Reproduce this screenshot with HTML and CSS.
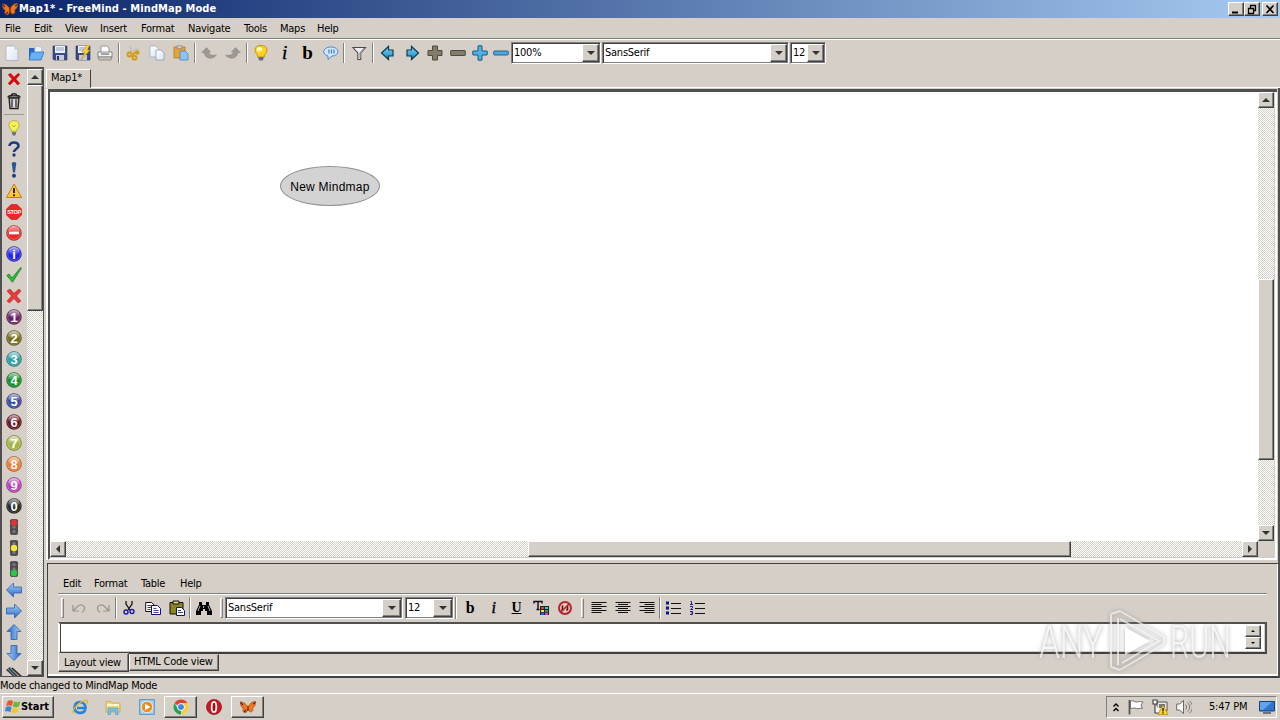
FILE: index.html
```
<!DOCTYPE html>
<html lang="en">
  <head>
    <meta charset="UTF-8" />
    <title>Map1* - FreeMind - MindMap Mode</title>
    <link rel="stylesheet" href="styles.css">
  </head>
  <body>
    <!-- shared icons -->
    <svg class="defs" width="0" height="0">
      <defs>
        <linearGradient id="gBlue" x1="0" y1="0" x2="0" y2="1"><stop offset="0" stop-color="#a9d2fa" /><stop offset="1" stop-color="#2766c8" /></linearGradient>
        <linearGradient id="gCyan" x1="0" y1="0" x2="0" y2="1"><stop offset="0" stop-color="#7fdcff" /><stop offset="1" stop-color="#1184bd" /></linearGradient>
        <linearGradient id="gShine" x1="0" y1="0" x2="0" y2="1"><stop offset="0" stop-color="#fff" stop-opacity=".6" /><stop offset="1" stop-color="#fff" stop-opacity=".08" /></linearGradient>
        <linearGradient id="gPage" x1="0" y1="0" x2="1" y2="1"><stop offset="0" stop-color="#fff" /><stop offset="1" stop-color="#dbe3f2" /></linearGradient>
      </defs>
      <symbol id="butterfly" viewBox="0 0 16 16">
        <path d="M8 8C6 4.500 3 2.500 0 3C.5 5.500 1 8.500 3.500 9.500C2 11 3 14.500 6 13.500C7.500 12.500 8 11 8 10C8.500 12 10.500 14 12 12.500C13.500 11.500 13 10 12.500 9C15 8 15.500 5 16 2.500C12 2 9.500 5 8 8Z" fill="#f0751d" stroke="#a84a12" stroke-width=".6" />
        <path d="M.5 3.500L3 6M15.500 3.500L13 5M4 13l2-2M8 7v5" stroke="#50240c" stroke-width="1.100" fill="none" />
      </symbol>
      <symbol id="page" viewBox="0 0 16 16"><path d="M2 1h8.500L14 4.500v11H2z" fill="url(#gPage)" stroke="#a7adba" stroke-width=".8" /><path d="M10.500 1v3.500H14z" fill="#c5cad6" /></symbol>
      <symbol id="ball" viewBox="0 0 16 16"><circle cx="8" cy="8" r="7.500" stroke="#000" stroke-opacity=".35" stroke-width=".8" /><circle cx="8" cy="8" r="6.300" fill="none" stroke="#fff" stroke-opacity=".35" stroke-width=".7" /><ellipse cx="8" cy="5" rx="5.500" ry="4" fill="url(#gShine)" /></symbol>
      <symbol id="light" viewBox="0 0 16 16"><path d="M3.500 2h9M3.500 7h9M3.500 12h9" stroke="#999" /><rect x="4.500" y=".5" width="7" height="15" rx="1" fill="#4b4b4b" stroke="#333" stroke-width=".6" /><circle cx="8" cy="3.500" r="1.700" fill="#787878" /><circle cx="8" cy="8" r="1.700" fill="#787878" /><circle cx="8" cy="12.500" r="1.700" fill="#787878" /></symbol>
      <symbol id="arrow" viewBox="0 0 16 16"><path d="M.5 8L7.500 1v4h8v6h-8v4z" fill="url(#gBlue)" stroke="#2d5fa8" stroke-width=".8" /></symbol>
      <symbol id="go" viewBox="0 0 16 16"><path d="M1.500 8L8.500 1.500v3.500h4.500v6H8.500v3.500z" fill="url(#gCyan)" stroke="#123a4e" stroke-width="1.200" /></symbol>
      <symbol id="plus" viewBox="0 0 16 16"><path d="M5.500 1h5v4.500H15v5h-4.500V15h-5v-4.500H1v-5h4.500z" /></symbol>
      <symbol id="plus-thin" viewBox="0 0 16 16"><path d="M6 1q2-.8 4 0v5h5q.8 2 0 4h-5v5q-2 .8-4 0v-5H1q-.8-2 0-4h5z" /></symbol>
      <symbol id="cross" viewBox="0 0 16 16"><path d="M1 3L4 1l4 4.300L13 1l2 2-4.500 5L15 13l-3 2-4-4.500L3.500 15 1 13l4.500-5z" /></symbol>
      <symbol id="undo" viewBox="0 0 16 16"><path d="M.7 7.500L5.500 2.500l4 4.500H7.500c.5 2.500 3.500 4 8 3-4.500 5.500-12 3.500-12.300-2.500z" fill="#9c9993" stroke="#85827c" stroke-width=".5" /></symbol>
      <symbol id="undo-thin" viewBox="0 0 16 16"><path d="M2 5v6h6M2.500 10.500l4-4c3-3 7.500-1 7 2 0 2-1 3-2.500 4" fill="none" stroke="#98948d" stroke-width="1.200" /></symbol>
      <symbol id="up" viewBox="0 0 8 4"><path d="M4 0L8 4H0z" /></symbol>
      <symbol id="down" viewBox="0 0 8 4"><path d="M0 0h8L4 4z" /></symbol>
    </svg>

    <div class="titlebar">
      <svg class="icon"><use href="#butterfly" /></svg>
      <h1>Map1* - FreeMind - MindMap Mode</h1>
      <div class="window-buttons">
        <button class="raised"><svg viewBox="0 0 12 11"><path d="M2 8.500h6" stroke="#000" stroke-width="2" /></svg></button>
        <button class="raised"><svg viewBox="0 0 12 11"><path d="M4.500 4V1.500h5v5H8M4 1.500h6M2.500 4.500h5v5h-5zM2 4.500h6" fill="none" stroke="#000" stroke-width="1.300" /></svg></button>
        <button class="raised close"><svg viewBox="0 0 12 11"><path d="M2.500 1.500l7 7.500M9.500 1.500l-7 7.500" stroke="#000" stroke-width="1.700" /></svg></button>
      </div>
    </div>

    <div class="menubar">
      <span>File</span><span>Edit</span><span>View</span><span>Insert</span><span>Format</span><span>Navigate</span><span>Tools</span><span>Maps</span><span>Help</span>
    </div>

    <div class="toolbar">
      <svg class="icon"><use href="#page" /></svg>
      <svg class="icon" viewBox="0 0 16 16"><path d="M1 3h5l1 2h6v9H1z" fill="#2767c9" /><path d="M8 1l6 1-1 7-7-1z" fill="#eef4ff" stroke="#9ab" stroke-width=".5" /><path d="M3 7h13l-3 8H1z" fill="#63b4f6" stroke="#2865bc" stroke-width=".7" /></svg>
      <svg class="icon" viewBox="0 0 16 16"><path d="M1 1h14v14H2l-1-1z" fill="#3b4c86" stroke="#26335f" stroke-width=".6" /><path d="M3 1h10v7H3z" fill="#eef1f8" /><path d="M4 3h8M4 5h8" stroke="#8fa0c4" /><path d="M4 10h8v5H4z" fill="#c6cbd8" /><path d="M5 11h2v4H5z" fill="#26335f" /></svg>
      <svg class="icon" viewBox="0 0 16 16"><path d="M1 1h14v14H2l-1-1z" fill="#3b4c86" stroke="#26335f" stroke-width=".6" /><path d="M3 1h10v7H3z" fill="#eef1f8" /><path d="M4 3h8M4 5h8" stroke="#8fa0c4" /><path d="M4 10h8v5H4z" fill="#c6cbd8" /><path d="M12 0l-5 7h3l-4 8 9-10h-3l3-5z" fill="#ffd42c" stroke="#c88a10" stroke-width=".6" /></svg>
      <svg class="icon" viewBox="0 0 16 16"><path d="M4 7V1h6l2 2v4" fill="#fff" stroke="#888" stroke-width=".8" /><path d="M1 7h14v5H1z" fill="#f3f1ed" stroke="#777" stroke-width=".8" /><path d="M1 12h14l-1 3H2z" fill="#c5c2bc" stroke="#777" stroke-width=".7" /><path d="M4 9h8" stroke="#555" /></svg>
      <i class="sep"></i>
      <svg class="icon" viewBox="0 0 16 16"><path d="M5 1l2 8M4 7l9-3" stroke="#c4bfb6" stroke-width="1.500" /><g fill="none" stroke="#d69a1b" stroke-width="2"><circle cx="4.500" cy="9.500" r="2" /><circle cx="9.500" cy="12.700" r="2" /><path d="M7.500 9.500l4-3" /><circle cx="12.300" cy="7.500" r="1.300" /></g></svg>
      <svg class="icon" viewBox="0 0 16 16"><path d="M1 1h6l3 3v8H1z" fill="url(#gPage)" stroke="#96a4c0" stroke-width=".7" /><path d="M7 5h5l3 3v7H7z" fill="url(#gPage)" stroke="#8292b4" stroke-width=".7" /></svg>
      <svg class="icon" viewBox="0 0 16 16"><path d="M1 2h11v11H1z" fill="#e7a333" stroke="#a8701a" stroke-width=".7" /><path d="M4 .7h5v3H4z" fill="#c9cbd2" stroke="#777" stroke-width=".6" /><path d="M7 6h5l3 3v6H7z" fill="#8fc3f6" stroke="#3a78bd" stroke-width=".7" /></svg>
      <i class="sep"></i>
      <svg class="icon"><use href="#undo" /></svg>
      <svg class="icon flip"><use href="#undo" /></svg>
      <i class="sep"></i>
      <svg class="icon" viewBox="0 0 16 16"><path d="M8 .5C.5.500 1 7 4.700 10v2h6.600v-2C15 7 15.500.5 8 .5z" fill="#ffd21e" stroke="#c58908" stroke-width=".9" /><ellipse cx="6.500" cy="4.300" rx="2.700" ry="2.500" fill="#fff7b0" /><path d="M5.500 12h5v2l-1 1.500h-3l-1-1.500z" fill="#6b6b78" /></svg>
      <span class="letter italic">i</span>
      <span class="letter">b</span>
      <svg class="icon" viewBox="0 0 16 16"><path d="M8 2c9 0 9 9 1 9l-4 3.500V11C-2 9 0 2 8 2z" fill="#cfe6ff" stroke="#3f7fc8" stroke-width=".9" /><path d="M6 4.500v4M8.500 4.500v4M11 4.500v4" stroke="#3f7fc8" stroke-width="1.200" /></svg>
      <i class="sep"></i>
      <svg class="icon" viewBox="0 0 16 16"><path d="M2 2.500h12.500L9.700 8v6.500H6.800V8z" fill="#f0efed" stroke="#4a4a4a" stroke-width="1.100" /><path d="M9 13V8l4-4.500" stroke="#999" stroke-width="1.300" fill="none" /></svg>
      <i class="sep"></i>
      <svg class="icon"><use href="#go" /></svg>
      <svg class="icon flip"><use href="#go" /></svg>
      <svg class="icon gray-plus"><use href="#plus" /></svg>
      <svg class="icon" viewBox="0 0 16 16"><rect x=".7" y="5.500" width="14.600" height="5" rx=".5" fill="#827c6b" stroke="#4f4a3d" /></svg>
      <svg class="icon blue-plus"><use href="#plus-thin" /></svg>
      <svg class="icon" viewBox="0 0 16 16"><rect x=".7" y="6" width="14.600" height="4" rx="1" fill="#4ba9dc" stroke="#1c597c" stroke-width=".9" /></svg>
      <div class="combo">100%<b class="raised"><svg class="tri"><use href="#down" /></svg></b></div>
      <div class="combo">SansSerif<b class="raised"><svg class="tri"><use href="#down" /></svg></b></div>
      <div class="combo">12<b class="raised"><svg class="tri"><use href="#down" /></svg></b></div>
    </div>

    <div class="workspace">
      <div class="side">
        <div class="side-icons">
          <svg class="icon del"><use href="#cross" /></svg>
          <svg class="icon trash" viewBox="0 0 16 17"><path d="M5.500 2.500c0-2 5-2 5 0M2 4.500C3 2 13 2 14 4.500z" fill="#ccc" stroke="#222" stroke-width="1.200" /><path d="M3 5.500h10l-1 10.500H4z" fill="#bbb" stroke="#222" stroke-width="1.300" /><path d="M6 7v7.500M10 7v7.500" stroke="#333" stroke-width="1.200" /><path d="M8 7v8" stroke="#fff" /></svg>
          <i class="rule"></i>
          <svg class="icon" viewBox="0 0 16 16"><path d="M8 .7c-6.500 0-6 6-2.700 9v1.500h5.400V9.700C14 6.700 14.500.7 8 .7z" fill="#f7f356" stroke="#aaa51c" stroke-width=".8" /><path d="M6 5l2 2 2-2" stroke="#b8b050" fill="none" /><path d="M6 12h4v2.500L8 16l-2-1.500z" fill="#777" /></svg>
          <svg class="icon" viewBox="0 0 16 16"><path d="M3.500 5c0-5 9.500-4.500 9 0-.3 3-4.500 3-4.500 6" fill="none" stroke="#1f3c7e" stroke-width="2.600" /><circle cx="8" cy="14" r="1.700" fill="#1f3c7e" /></svg>
          <svg class="icon" viewBox="0 0 16 16"><path d="M5.700 1q2.300-1.800 4.600 0L9 10.500H7z" fill="#2b5593" /><circle cx="8" cy="13.700" r="2" fill="#1f3c7e" /></svg>
          <svg class="icon" viewBox="0 0 16 16"><path d="M8 1l7.500 13.500H.5z" fill="#ffc63a" stroke="#b87412" stroke-width=".9" /><path d="M8 5v5" stroke="#222" stroke-width="1.900" /><circle cx="8" cy="12.300" r="1.100" fill="#222" /></svg>
          <svg class="icon" viewBox="0 0 16 16"><path d="M5 .5h6L15.500 5v6L11 15.500H5L.5 11V5z" fill="#ee2626" stroke="#b00" stroke-width=".5" /><text x="8" y="10" class="stop">STOP</text></svg>
          <svg class="icon" viewBox="0 0 16 16"><use href="#ball" fill="#f02525" /><path d="M3 8h10" stroke="#fff" stroke-width="2.700" /></svg>
          <svg class="icon" viewBox="0 0 16 16"><use href="#ball" fill="#2424e8" /><text x="8" y="12.500" class="num">i</text></svg>
          <svg class="icon" viewBox="0 0 16 16"><path d="M.8 8.500L3 7l3 4L14.500.7 15.500 1 6.500 15.300z" fill="#22c72e" stroke="#176c1d" stroke-width=".7" /></svg>
          <svg class="icon bad"><use href="#cross" /></svg>
          <svg class="icon" viewBox="0 0 16 16"><use href="#ball" fill="#6b1f62" /><text x="8" y="12.800" class="num">1</text></svg>
          <svg class="icon" viewBox="0 0 16 16"><use href="#ball" fill="#746a1b" /><text x="8" y="12.800" class="num">2</text></svg>
          <svg class="icon" viewBox="0 0 16 16"><use href="#ball" fill="#269ba5" /><text x="8" y="12.800" class="num">3</text></svg>
          <svg class="icon" viewBox="0 0 16 16"><use href="#ball" fill="#0b8c20" /><text x="8" y="12.800" class="num">4</text></svg>
          <svg class="icon" viewBox="0 0 16 16"><use href="#ball" fill="#3744a0" /><text x="8" y="12.800" class="num">5</text></svg>
          <svg class="icon" viewBox="0 0 16 16"><use href="#ball" fill="#680c18" /><text x="8" y="12.800" class="num">6</text></svg>
          <svg class="icon" viewBox="0 0 16 16"><use href="#ball" fill="#a4b441" /><text x="8" y="12.800" class="num">7</text></svg>
          <svg class="icon" viewBox="0 0 16 16"><use href="#ball" fill="#f27428" /><text x="8" y="12.800" class="num">8</text></svg>
          <svg class="icon" viewBox="0 0 16 16"><use href="#ball" fill="#bd38bd" /><text x="8" y="12.800" class="num">9</text></svg>
          <svg class="icon" viewBox="0 0 16 16"><use href="#ball" fill="#222" /><text x="8" y="12.800" class="num">0</text></svg>
          <svg class="icon" viewBox="0 0 16 16"><use href="#light" /><circle cx="8" cy="3.700" r="2.900" fill="#f02b35" /></svg>
          <svg class="icon" viewBox="0 0 16 16"><use href="#light" /><circle cx="8" cy="8" r="3.200" fill="#f8e63b" /></svg>
          <svg class="icon" viewBox="0 0 16 16"><use href="#light" /><circle cx="8" cy="12" r="3.200" fill="#27ca42" /></svg>
          <svg class="icon"><use href="#arrow" /></svg>
          <svg class="icon flip"><use href="#arrow" /></svg>
          <svg class="icon turn-up"><use href="#arrow" /></svg>
          <svg class="icon turn-down"><use href="#arrow" /></svg>
          <svg class="icon" viewBox="0 0 16 16"><path d="M0 4l4-3 12 12-3 3z" fill="#35444c" /><path d="M2 3l12 12M4 2l12 12" stroke="#8fa0a8" stroke-width=".8" /><path d="M6 2l10 9" stroke="#222" stroke-width="1.400" /></svg>
        </div>
        <div class="vscroll">
          <b class="raised arrow-btn"><svg class="tri"><use href="#up" /></svg></b>
          <b class="raised side-thumb"></b>
          <b class="raised arrow-btn end"><svg class="tri"><use href="#down" /></svg></b>
        </div>
      </div>

      <div class="main">
        <div class="tabs"><span class="map-tab">Map1*</span></div>
        <div class="map">
          <div class="canvas"><div class="node">New Mindmap</div></div>
          <div class="vscroll">
            <b class="raised arrow-btn"><svg class="tri"><use href="#up" /></svg></b>
            <b class="raised map-vthumb"></b>
            <b class="raised arrow-btn end"><svg class="tri"><use href="#down" /></svg></b>
          </div>
          <div class="hscroll">
            <b class="raised arrow-btn"><svg class="tri left"><use href="#up" /></svg></b>
            <b class="raised map-hthumb"></b>
            <b class="raised arrow-btn end"><svg class="tri right"><use href="#up" /></svg></b>
          </div>
        </div>

        <div class="note">
          <div class="note-menu"><span>Edit</span><span>Format</span><span>Table</span><span>Help</span></div>
          <div class="note-tools">
            <i class="grip"></i>
            <svg class="icon"><use href="#undo-thin" /></svg>
            <svg class="icon flip"><use href="#undo-thin" /></svg>
            <i class="sep"></i>
            <svg class="icon" viewBox="0 0 16 16"><path d="M5 1v3l4 6M11 1v3l-4 6" stroke="#111" stroke-width="1.300" fill="none" /><circle cx="5" cy="12" r="2" fill="none" stroke="#1a1a9c" stroke-width="1.400" /><circle cx="11" cy="11.500" r="2" fill="none" stroke="#1a1a9c" stroke-width="1.400" /></svg>
            <svg class="icon" viewBox="0 0 16 16"><path d="M.7 2.500h6l3 3v6h-9z" fill="#fff" stroke="#111" /><path d="M2.500 5.500h4M2.500 7.500h4M2.500 9.500h3" stroke="#111" stroke-width=".8" /><path d="M6.500 5.500h6l3 3v6h-9z" fill="#fff" stroke="#10107a" /><path d="M8.500 8.500h3M8.500 10.500h5M8.500 12.500h5" stroke="#10107a" stroke-width=".8" /></svg>
            <svg class="icon" viewBox="0 0 16 16"><path d="M1 2.500h13V14H1z" fill="#8b8624" stroke="#111" /><path d="M4 1h6v3H4z" fill="#d9d56a" stroke="#111" /><path d="M7.500 7.500h5l3 3v5h-8z" fill="#fff" stroke="#10107a" /><path d="M9 10.500h3M9 12.500h5" stroke="#10107a" stroke-width=".8" /></svg>
            <i class="sep"></i>
            <svg class="icon" viewBox="0 0 16 16"><path d="M3 2h3v3h4V2h3v3l3 6v4h-5v-4H9V9H7v2H5v4H0v-4l3-6z" /><path d="M4 6l-2 5M12 6l2 5M7.500 6v2" stroke="#ddd" stroke-width=".8" /></svg>
            <i class="grip"></i>
            <div class="combo">SansSerif<b class="raised"><svg class="tri"><use href="#down" /></svg></b></div>
            <div class="combo">12<b class="raised"><svg class="tri"><use href="#down" /></svg></b></div>
            <i class="sep"></i>
            <span class="letter small">b</span>
            <span class="letter small italic">i</span>
            <span class="letter small under">U</span>
            <svg class="icon" viewBox="0 0 16 16"><path d="M1 3.500v-2h8v2M5 2v7.500M3.500 9.500h3" stroke="#111" stroke-width="1.400" fill="none" /><path d="M7 6h9v9H7z" fill="#222" /><path d="M8 7h3v2H8z" fill="#e33" /><path d="M12 7h3v2h-3z" fill="#2cd0c0" /><path d="M8 10h3v2H8z" fill="#f3e32d" /><path d="M12 10h3v2h-3z" fill="#2b9e38" /><path d="M8 12.500h3V15H8z" fill="#2a55e0" /><path d="M12 12.500h3V15h-3z" fill="#d33ad3" /></svg>
            <svg class="icon" viewBox="0 0 16 16"><circle cx="8" cy="8" r="6" fill="#e7c3bf" stroke="#b3262c" stroke-width="2" /><path d="M5.500 5.500v4l-1 1M10.500 5.500v4l-1 1" stroke="#5a1518" stroke-width="1.600" fill="none" /><path d="M4 12l8-8" stroke="#b3262c" stroke-width="1.600" /></svg>
            <i class="grip"></i>
            <svg class="icon" viewBox="0 0 16 16"><path d="M.5 2.500h15M.5 4.500h10M.5 6.500h15M.5 8.500h10M.5 10.500h15M.5 12.500h10" stroke="#111" /></svg>
            <svg class="icon" viewBox="0 0 16 16"><path d="M.5 2.500h15M3 4.500h10M.5 6.500h15M3 8.500h10M.5 10.500h15M3 12.500h10" stroke="#111" /></svg>
            <svg class="icon" viewBox="0 0 16 16"><path d="M.5 2.500h15M5.500 4.500h10M.5 6.500h15M5.500 8.500h10M.5 10.500h15M5.500 12.500h10" stroke="#111" /></svg>
            <i class="sep"></i>
            <svg class="icon" viewBox="0 0 16 16"><path d="M1 1.500h3v3H1zM1 6.500h3v3H1zM1 11.500h3v3H1z" fill="#12127e" /><path d="M6 3.500h10M6 8.500h10M6 13.500h10" stroke="#111" /></svg>
            <svg class="icon" viewBox="0 0 16 16"><path d="M1.500 1.500h1v3M1 4.500h3M1 6.500h2.500v1.500L1.500 9.500H4M1 11.500h2.500v3H1M2 13h2" stroke="#12127e" stroke-width=".9" fill="none" /><path d="M6 3.500h10M6 8.500h10M6 13.500h10" stroke="#111" /></svg>
          </div>
          <div class="editor">
            <div class="spin"><b class="raised"><svg><use href="#up" /></svg></b><b class="raised"><svg><use href="#down" /></svg></b></div>
          </div>
          <div class="view-tabs"><span class="active">Layout view</span><span>HTML Code view</span></div>
        </div>
      </div>
    </div>

    <div class="status">Mode changed to MindMap Mode</div>

    <div class="taskbar">
      <div class="raised start">
        <svg class="icon" viewBox="0 0 16 16"><path d="M2.500 2.500C4 1 6 1 8 2.300L6.800 7.300C5 6 3 6 1.200 7z" fill="#e8552a" /><path d="M9 2.600c2 1 4 1 6.500-.3L14 7.200c-2 1.200-4 1.300-6.200.4z" fill="#6db63a" /><path d="M1 8c2-1 4-1 5.600.2l-1.200 5C4 12-1 12-.4 13z" fill="#3c86d8" /><path d="M7.600 8.500c2 1 4 1 6.200-.2l-1.300 5c-2 1.200-4 1.200-6.200.2z" fill="#f7c52c" /></svg>
        Start
      </div>
      <div class="task">
        <svg class="icon" viewBox="0 0 16 16"><path d="M13.500 10.500C11 16 2.500 14.500 2.500 8.500c0-7.500 11-7 11 .5H5" fill="none" stroke="#2484d8" stroke-width="2.700" /><path d="M1.500 14.500C-1 11 9 .5 15 1.500c1 1 .5 2-.5 3.500" fill="none" stroke="#e5b62e" stroke-width="1.300" /></svg>
      </div>
      <div class="task">
        <svg class="icon" viewBox="0 0 16 16"><path d="M1 2.500h5l1 1.500h8v9H1z" fill="#f2d675" stroke="#c8a23e" stroke-width=".7" /><path d="M2 6h12" stroke="#fff6c9" stroke-width="2" /><path d="M3 15.500V9h10v6.500h-2.500V12h-5v3.500z" fill="#7cc3ea" stroke="#4f94bf" stroke-width=".6" /></svg>
      </div>
      <div class="task">
        <svg class="icon" viewBox="0 0 16 16"><rect x=".7" y=".7" width="14.600" height="14.600" fill="#a5d4f4" stroke="#4b91c8" /><circle cx="8" cy="8" r="5.700" fill="#f18a1a" stroke="#fff" stroke-width=".7" /><path d="M6 4.700L11.500 8 6 11.300z" fill="#fff" /></svg>
      </div>
      <div class="task raised">
        <svg class="icon" viewBox="0 0 16 16"><path d="M8 8L1.500 4.300A7.500 7.500 0 0 1 14.500 4.300H8z" fill="#df4132" /><path d="M8 8v7.500A7.500 7.500 0 0 1 1.500 4.300L5 10z" fill="#27a04c" /><path d="M8 4.300h6.500A7.500 7.500 0 0 1 8 15.500L11.200 9.500z" fill="#fbcf2f" /><circle cx="8" cy="8" r="3.500" fill="#4285e4" stroke="#fff" /></svg>
      </div>
      <div class="task">
        <svg class="icon" viewBox="0 0 16 16"><circle cx="8" cy="8" r="7.500" fill="#cc1820" stroke="#7c0a10" stroke-width=".7" /><ellipse cx="8" cy="8" rx="2.300" ry="5.200" fill="#a00e14" stroke="#fff" stroke-width="1.700" /></svg>
      </div>
      <div class="task raised">
        <svg class="icon"><use href="#butterfly" /></svg>
      </div>
      <div class="tray">
        <svg class="chevrons" viewBox="0 0 8 10"><path d="M1.500 4L4 1.500 6.500 4M1.500 8.500L4 6l2.500 2.500" fill="none" stroke="#000" stroke-width="1.400" /></svg>
        <svg class="icon" viewBox="0 0 16 16"><path d="M1.500 1v14.500" stroke="#555" stroke-width="1.800" /><path d="M2.500 2c3-1 4 1 6 1s3-1 6.500 0L13 6l1.500 3.500c-3-1-4 1-6 0s-4 0-6 0z" fill="#fff" stroke="#666" stroke-width=".9" /></svg>
        <svg class="icon" viewBox="0 0 16 16"><path d="M5 3h10v9H5z" fill="#e8e8e8" stroke="#555" /><path d="M7 5h6v4H7z" fill="#777" /><path d="M1 1h4v4H1zM3 5v9h6" fill="#fff" stroke="#444" stroke-width="1.200" /><path d="M11 6l5 9.500H6z" fill="#ffd51e" stroke="#a87a00" stroke-width=".6" /><path d="M11 9v3.500M11 13.300v1.200" stroke="#111" stroke-width="1.300" /></svg>
        <svg class="icon" viewBox="0 0 16 16"><path d="M.7 5h3L7.500 1.500v13L3.700 11h-3z" fill="#fff" stroke="#666" /><path d="M9.500 5.500c1.500 1.500 1.500 3.500 0 5M11.500 3.500c3 3 3 6 0 9M13.500 1.800c4 4 4 8.400 0 12.400" fill="none" stroke="#777" /></svg>
        <span class="clock">5:47 PM</span>
        <svg class="icon" viewBox="0 0 16 16"><path d="M.5 2.500h15v9.500H.5z" fill="#2d75d0" stroke="#163f80" /><path d="M1 3h12L4 11H1z" fill="#5ea5ee" /><path d="M4 14h8" stroke="#456" stroke-width="1.500" /></svg>
      </div>
    </div>

    <svg class="watermark" viewBox="0 0 220 68">
      <text x="5" y="52" textLength="64" lengthAdjust="spacingAndGlyphs">ANY</text>
      <path d="M77 8v53M84 59V12M86 5l44 26M86 64l44-26M86 13l39 22-37 22M130 31v7M77 8l9-3M77 61l9 3" class="play-line" />
      <path d="M91 21l25 14-25 14z" class="play" />
      <text x="136" y="52" textLength="61" lengthAdjust="spacingAndGlyphs">RUN</text>
    </svg>
  </body>
</html>
```
FILE: styles.css
```
* {
  box-sizing: border-box;
}
body {
  margin: 0;
  width: 1280px;
  height: 720px;
  overflow: hidden;
  display: flex;
  flex-direction: column;
  position: relative;
  background-color: #d5cfc7;
  color: #000;
  font: 11px/14px "DejaVu Sans Condensed", "DejaVu Sans", sans-serif;
  letter-spacing: -0.24px;
  white-space: nowrap;
}
.defs {
  position: absolute;
}
.icon {
  width: 16px;
  height: 16px;
  flex: none;
}
.flip {
  transform: scaleX(-1);
}
.raised {
  background-color: #d4d0c8;
  border: 1px solid;
  border-color: #fff #404040 #404040 #fff;
  box-shadow: inset -1px -1px #808080;
  display: flex;
  align-items: center;
  justify-content: center;
}
.tri {
  width: 8px;
  height: 4px;
  fill: #333;
}
.left {
  transform: rotate(-90deg);
}
.right {
  transform: rotate(90deg);
}

/* title and menu */
.titlebar {
  height: 18px;
  flex: none;
  display: flex;
  align-items: center;
  padding: 0 2px;
  background: linear-gradient(to right, #0a246a, #a6caf0);
  color: #fff;
}
.titlebar h1 {
  margin: 0 auto 0 1px;
  font-size: 11px;
  font-weight: bold;
  letter-spacing: 0.1px;
}
.window-buttons {
  display: flex;
}
.window-buttons button {
  width: 16px;
  height: 14px;
  padding: 0;
}
.window-buttons .close {
  margin-left: 2px;
}
.window-buttons svg {
  width: 12px;
  height: 11px;
}
.menubar {
  height: 22px;
  flex: none;
  display: grid;
  grid-template-columns: 29px 31px 35px 41px 47px 56px 36px 37px 40px;
  align-items: center;
  padding-left: 5px;
  border-bottom: 1px solid #fff;
  box-shadow: inset 0 -1px #808080;
}

/* toolbars */
.toolbar {
  height: 27px;
  flex: none;
  display: grid;
  grid-template-columns:
    24px 24px 24px 21px 24px 4px 24px 24px 24px 4px 24px 24px 4px
    24px 23px 23px 23px 4px 25px 4px 25px 23px 23px 23px 22px 20px
    91px 188px 37px;
  align-items: center;
  justify-items: center;
  padding-bottom: 2px;
}
.sep {
  width: 2px;
  height: 22px;
  background-color: #fff;
  border-left: 1px solid #808080;
}
.toolbar .sep {
  height: 20px;
}
.letter {
  font: bold 19px/20px "Liberation Serif", serif;
}
.letter.small {
  font-size: 16px;
  line-height: 18px;
}
.letter.italic {
  font-style: italic;
  font-weight: normal;
  -webkit-text-stroke: 0.4px #000;
}
.letter.under {
  font-size: 14px;
  text-decoration: underline;
}
.gray-plus {
  fill: #827c6b;
  stroke: #4f4a3d;
}
.blue-plus {
  fill: #4fb2e4;
  stroke: #1c597c;
}
.combo {
  justify-self: start;
  width: calc(100% - 1px);
  height: 22px;
  display: flex;
  align-items: center;
  justify-content: space-between;
  padding: 0 1px 0 2px;
  background-color: #fff;
  border: 1px solid;
  border-color: #808080 #fff #fff #808080;
  box-shadow: inset 1px 1px #404040, inset -1px -1px #808080;
}
.combo b {
  width: 17px;
  height: 18px;
}

/* left icon list */
.workspace {
  height: 611px;
  flex: none;
  display: flex;
}
.side {
  width: 44px;
  height: 610px;
  display: flex;
  border: 1px solid #505050;
  border-width: 2px 1px 1px 2px;
  overflow: hidden;
}
.side-icons {
  width: 25px;
  display: flex;
  flex-direction: column;
  align-items: center;
  gap: 5px;
  padding: 2px 1px 0 0;
  overflow: hidden;
}
.side-icons .rule {
  width: 20px;
  height: 2px;
  margin: -1px 0 0;
  border-top: 1px solid #999;
  background-color: #fff;
}
.side-icons .trash {
  height: 18px;
}
.del {
  fill: #d01010;
  padding: 2px;
}
.side-icons .del {
  padding: 1px;
}
.bad {
  fill: #e83a3a;
  stroke: #a51b1b;
  stroke-width: 0.5px;
}
.turn-up {
  transform: rotate(90deg);
}
.turn-down {
  transform: rotate(-90deg);
}
.num {
  font: bold 13px "Liberation Sans", sans-serif;
  fill: #fff;
  text-anchor: middle;
  letter-spacing: 0;
}
.stop {
  font: bold 5.5px "Liberation Sans", sans-serif;
  fill: #fff;
  text-anchor: middle;
  letter-spacing: -0.3px;
}

/* scrollbars */
.vscroll,
.hscroll {
  display: flex;
  background: repeating-conic-gradient(#fff 0 25%, #d4d0c8 0 50%) 0 0 / 2px 2px;
}
.vscroll {
  width: 16px;
  flex-direction: column;
}
.hscroll {
  height: 16px;
}
.arrow-btn {
  width: 16px;
  height: 16px;
  flex: none;
}
.vscroll .end {
  margin-top: auto;
}
.hscroll .end {
  margin-left: auto;
}
.side-thumb {
  height: 226px;
}
.map-vthumb {
  height: 181px;
  margin-top: 171px;
}
.map-hthumb {
  width: 543px;
  margin-left: 462px;
}

/* map view */
.main {
  width: 1234px;
  margin-left: 2px;
  display: flex;
  flex-direction: column;
  border-right: 2px solid #505050;
}
.tabs {
  height: 21px;
  padding-top: 2px;
  margin-right: -2px;
  background-color: #d5cfc7;
  border-bottom: 1px solid #fff;
}
.map-tab {
  display: block;
  width: 45px;
  height: 19px;
  padding: 1px 0 0 4px;
  background-color: #d5cfc7;
  border: 1px solid;
  border-color: #fff #404040 transparent #fff;
}
.map {
  height: 471px;
  display: grid;
  grid-template: 449px 16px / 1208px 16px;
  margin: 1px 1px 0 2px;
  border: solid #505050;
  border-width: 3px 0 0 2px;
  border-bottom: 2px solid #fff;
  box-shadow: -2px 0 #fff, inset -2px 0 #fff;
}
.canvas {
  background-color: #fff;
  padding: 74px 0 0 230px;
}
.node {
  width: 100px;
  height: 40px;
  border: 1px solid #909090;
  border-radius: 50%;
  background-color: #d3d3d3;
  text-align: center;
  font: 12px/40px "Liberation Sans", sans-serif;
  letter-spacing: 0.25px;
}

/* note editor */
.note {
  height: 115px;
  margin: 3px 0 0 1px;
  padding: 0 11px 0 10px;
  border: solid #404040;
  border-width: 1px 0 2px 1px;
  box-shadow: inset -1px -2px #fff;
}
.note-menu {
  height: 31px;
  padding: 13px 0 0 5px;
  display: grid;
  grid-template-columns: 31px 47px 39px 40px;
  border-bottom: 1px solid #fff;
  box-shadow: inset 0 -1px #808080;
}
.note-tools {
  height: 27px;
  display: grid;
  grid-template-columns:
    9px 24px 24px 2px 24px 24px 24px 2px 26px 8px 180px 49px 4px
    24px 23px 23px 25px 24px 10px 24px 24px 24px 2px 24px 24px;
  align-items: center;
  justify-items: center;
  padding-bottom: 2px;
}
.note-tools .combo {
  width: calc(100% - 2px);
}
.note-tools .combo:nth-of-type(2) {
  width: 100%;
}
.note-tools .combo b {
  width: 19px;
}
.grip {
  width: 3px;
  height: 20px;
  border: 1px solid;
  border-color: #fff #808080 #808080 #fff;
}
.editor {
  height: 32px;
  padding: 1px 4px;
  display: flex;
  justify-content: flex-end;
  background-color: #fff;
  border: 2px solid;
  border-color: #505050 #505050 #404040 #fff;
  box-shadow: inset 1px 0 #404040, inset -1px -1px #d5cfc7;
}
.spin {
  width: 16px;
}
.spin b {
  height: 12px;
}
.spin svg {
  width: 4px;
  height: 2px;
}
.view-tabs {
  display: flex;
  align-items: flex-start;
}
.view-tabs span {
  height: 17px;
  width: 90px;
  padding: 0 0 0 4px;
  border: 1px solid;
  border-color: transparent #404040 #404040 #fff;
  box-shadow: inset -1px -1px #808080;
}
.view-tabs .active {
  height: 19px;
  width: 71px;
  padding: 2px 0 0 5px;
  margin-top: -1px;
  background-color: #d5cfc7;
}

/* bottom of the screen */
.status {
  height: 15px;
  padding-top: 1px;
  flex: none;
}
.taskbar {
  height: 27px;
  flex: none;
  display: flex;
  align-items: center;
  padding: 0 3px 0 2px;
  border-top: 1px solid #fff;
}
.start {
  width: 52px;
  height: 22px;
  padding-right: 2px;
  margin-right: 9px;
  font-weight: bold;
  letter-spacing: 0;
}
.task {
  width: 33px;
  height: 22px;
  display: flex;
  align-items: center;
  justify-content: center;
  margin-right: 0.7px;
}
.tray {
  width: 171px;
  height: 22px;
  margin-left: auto;
  display: flex;
  align-items: center;
  gap: 8px;
  padding-left: 5px;
  border: 1px solid;
  border-color: #808080 #fff #fff #808080;
}
.chevrons {
  width: 8px;
  height: 11px;
}
.clock {
  width: 42px;
  margin: 0 0 0 9px;
}
.watermark {
  position: absolute;
  left: 1034px;
  top: 606px;
  width: 220px;
  height: 68px;
  overflow: visible;
  opacity: 0.75;
  filter: drop-shadow(0 0 2px #888);
}
.watermark text {
  font: 300 47px Roboto, sans-serif;
  letter-spacing: 0;
  fill: #f4f4f4;
}
.play-line {
  fill: none;
  stroke: #eee;
  stroke-width: 2px;
}
.play {
  fill: #fff;
}
```
